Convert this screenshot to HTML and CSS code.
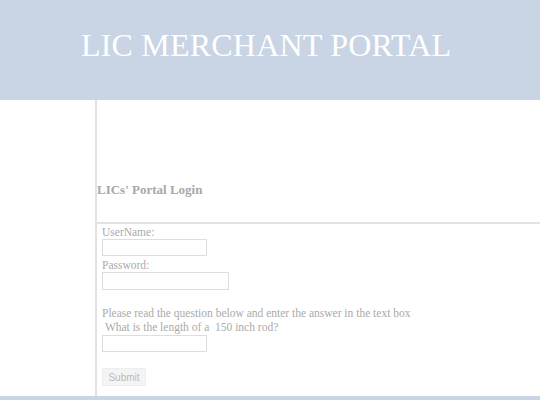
FILE: index.html
```html
<!DOCTYPE html>
<html>
<head>
<meta charset="utf-8">
<link rel="stylesheet" href="styles.css">
</head>
<body>
<div class="header"><h1 class="title">LIC MERCHANT PORTAL</h1></div>
<div class="main">
  <div class="content">
    <div class="login-head"><h2 class="login-title">LICs' Portal Login</h2></div>
    <form class="form">
      <label class="lbl">UserName:</label>
      <input class="field f-user" type="text">
      <label class="lbl">Password:</label>
      <input class="field f-pass" type="password">
      <p class="question">Please read the question below and enter the answer in the text box<br>&nbsp;What is the length of a &nbsp;150 inch rod?</p>
      <input class="field f-ans" type="text">
      <button class="submit" type="button">Submit</button>
    </form>
  </div>
</div>
<div class="footer"></div>
</body>
</html>
```
FILE: styles.css
```css
html, body { margin: 0; padding: 0; background: #fff; }
body { font-family: "Liberation Serif", "Times New Roman", serif; color: #aaa; overflow: hidden; }
.header { height: 100px; background: #c9d5e4; display: flex; align-items: flex-start; }
.title { margin: 27px 0 0 81px; font-weight: normal; font-size: 32px; color: #fff; letter-spacing: 0.2px; line-height: 36px; }
.main { height: 296px; display: flex; }
.content { margin-left: 95px; border-left: 2px solid #e2e2e2; flex: 1; display: flex; flex-direction: column; }
.login-head { height: 122px; border-bottom: 2px solid #e3e3e3; display: flex; align-items: flex-start; }
.login-title { margin: 82px 0 0 0; font-size: 13px; font-weight: bold; color: #a8a8a8; line-height: 16px; }
.form { display: flex; flex-direction: column; align-items: flex-start; padding-left: 5px; padding-top: 2px; font-size: 11.5px; }
.lbl { line-height: 13px; color: #aaa; }
.field { box-sizing: border-box; height: 17px; border: 1px solid #ddd; margin: 0; padding: 0; background: #fff; }
.f-user { width: 105px; margin-bottom: 3px; }
.f-pass { width: 127px; height: 18px; }
.f-ans { width: 105px; margin-top: 1px; }
.question { margin: 16px 0 0 0; line-height: 14px; color: #aaa; }
.submit { margin-top: 16px; height: 18px; width: 44px; padding: 0; border: 1px solid #eee; background: #f4f4f4; color: #bbb; font-family: "Liberation Sans", Arial, sans-serif; font-size: 10px; }
.footer { height: 4px; background: #c9d5e4; }
```
